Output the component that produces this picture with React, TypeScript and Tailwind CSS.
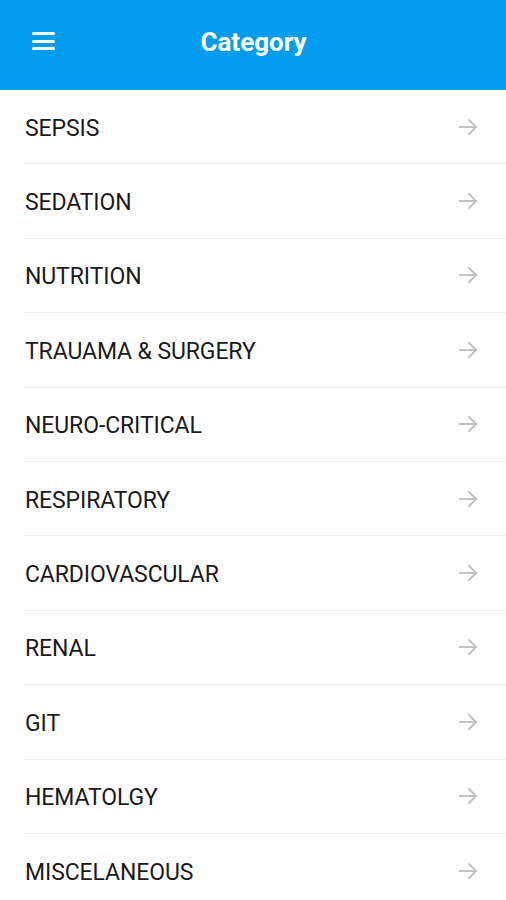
const categories = [
  "SEPSIS",
  "SEDATION",
  "NUTRITION",
  "TRAUAMA & SURGERY",
  "NEURO-CRITICAL",
  "RESPIRATORY",
  "CARDIOVASCULAR",
  "RENAL",
  "GIT",
  "HEMATOLGY",
  "MISCELANEOUS",
];

function ArrowIcon() {
  return (
    <svg width="20" height="18" viewBox="0 0 20 18" fill="none" stroke="#c2c2c2" strokeWidth="2" strokeLinecap="square">
      <path d="M1 9h16" />
      <path d="M10 2l7 7-7 7" />
    </svg>
  );
}

export default function App() {
  return (
    <div className="w-[506px] h-[900px] overflow-hidden bg-white" style={{ fontFamily: "Roboto, 'Liberation Sans', sans-serif" }}>
      <header className="h-[90px] bg-[#049cef] flex items-center relative">
        <button className="absolute left-[32px] top-[32px] w-[23px] h-[18px] flex flex-col justify-between">
          <span className="block h-[3px] w-full bg-white rounded-sm" />
          <span className="block h-[3px] w-full bg-white rounded-sm" />
          <span className="block h-[3px] w-full bg-white rounded-sm" />
        </button>
        <h1 className="w-full text-center text-white text-[26px] font-bold pb-[6px] pl-[1px]">Category</h1>
      </header>
      <ul className="pl-[24px]">
        {categories.map((c) => (
          <li key={c} className="h-[74.4px] border-b border-[#ececec] flex items-center justify-between pr-[27px]">
            <span className="pl-[1px] pt-[3px] text-[23px] text-[#1a1a1a] leading-none tracking-[-0.1px]">{c}</span>
            <ArrowIcon />
          </li>
        ))}
      </ul>
    </div>
  );
}
